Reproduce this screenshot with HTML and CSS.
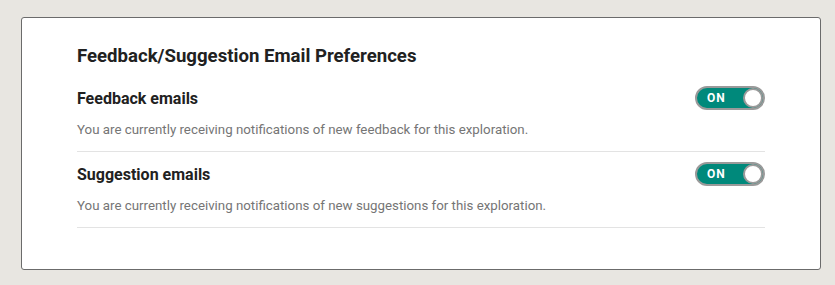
FILE: index.html
```html
<!DOCTYPE html>
<html lang="en">
  <head>
    <meta charset="UTF-8" />
    <title>Email Preferences</title>
    <link rel="stylesheet" href="styles.css">
  </head>
  <body>
    <div class="card">
      <h2 class="card-title">Feedback/Suggestion Email Preferences</h2>

      <!-- Feedback -->
      <div class="pref">
        <div class="pref-head">
          <span class="pref-label">Feedback emails</span>
          <button class="toggle on" type="button">
            <span class="toggle-text">ON</span>
            <span class="knob"></span>
          </button>
        </div>
        <p class="pref-desc">You are currently receiving notifications of new feedback for this exploration.</p>
      </div>

      <!-- Suggestions -->
      <div class="pref">
        <div class="pref-head">
          <span class="pref-label">Suggestion emails</span>
          <button class="toggle on" type="button">
            <span class="toggle-text">ON</span>
            <span class="knob"></span>
          </button>
        </div>
        <p class="pref-desc">You are currently receiving notifications of new suggestions for this exploration.</p>
      </div>
    </div>
  </body>
</html>
```

FILE: styles.css
```css
body {
  margin: 0;
  padding: 17px 14px 0 21px;
  background-color: #e8e6e1;
  font-family: Roboto, "Noto Sans", sans-serif;
  color: #212121;
}

.card {
  width: 800px;
  height: 253px;
  box-sizing: border-box;
  background: #fff;
  border: 1px solid #6b6b6b;
  border-radius: 3px;
  padding: 27px 55px 0 55px;
}

.card-title {
  margin: 0 0 19px;
  font-size: 18.6px;
  line-height: 22px;
  font-weight: 700;
}

.pref {
  padding-bottom: 12px;
  border-bottom: 1px solid #e3e3e3;
}

.pref + .pref {
  margin-top: 10px;
}

.pref-head {
  display: flex;
  justify-content: space-between;
  align-items: flex-start;
  height: 24px;
}

.pref-label {
  font-size: 16px;
  line-height: 24px;
  font-weight: 700;
  padding-top: 1px;
}

.pref-desc {
  margin: 11px 0 0;
  font-size: 13.3px;
  line-height: 18px;
  color: #757575;
}

.toggle {
  position: relative;
  width: 70px;
  height: 24px;
  box-sizing: border-box;
  border: 2px solid #9a9a9a;
  border-radius: 12px;
  background: #00897b;
  padding: 0 0 0 10px;
  display: flex;
  align-items: center;
  cursor: pointer;
  font-family: inherit;
}

.toggle-text {
  color: #fff;
  font-size: 12px;
  font-weight: 700;
  letter-spacing: 1px;
}

.knob {
  position: absolute;
  right: 0;
  top: 0;
  width: 16px;
  height: 16px;
  border-radius: 50%;
  background: #fff;
  border: 2px solid #9a9a9a;
}
```
